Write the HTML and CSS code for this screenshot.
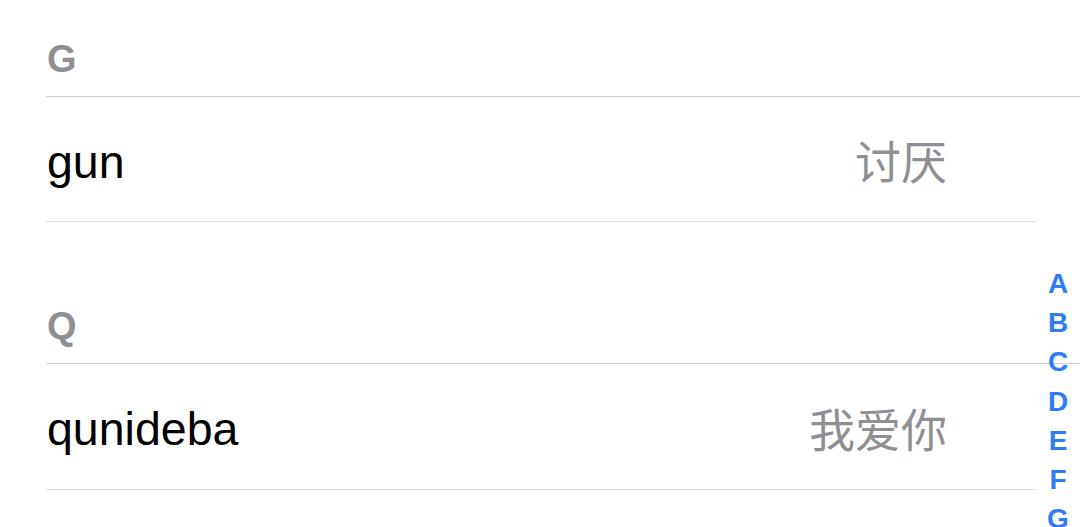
FILE: index.html
```html
<!DOCTYPE html>
<html lang="zh-CN">
<head>
    <meta charset="UTF-8">
    <meta name="viewport" content="width=device-width, initial-scale=1.0">
    <title>Contacts</title>
    <link rel="stylesheet" href="styles.css">
</head>
<body>
    <div id="wrapper">
        <div class="section first">
            <div class="section-header">G</div>
            <div class="row">
                <span class="name">gun</span>
                <span class="detail">讨厌</span>
            </div>
        </div>
        <div class="section">
            <div class="section-header">Q</div>
            <div class="row last">
                <span class="name">qunideba</span>
                <span class="detail">我爱你</span>
            </div>
        </div>

        <!-- 오른쪽 인덱스 바 -->
        <ul id="index">
            <li>A</li>
            <li>B</li>
            <li>C</li>
            <li>D</li>
            <li>E</li>
            <li>F</li>
            <li>G</li>
        </ul>
    </div>
</body>
</html>
```

FILE: styles.css
```css
html, body{
    margin: 0;
    padding: 0;
    background-color: #ffffff;
}

body{
    font-family: "Liberation Sans", "Noto Sans CJK SC", sans-serif;
    overflow: hidden;
}

#wrapper{
    position: relative;
    width: 1080px;
    height: 527px;
}

.section{
    padding-top: 45px;
}

.section.first{
    padding-top: 0;
}

.section-header{
    height: 97px;
    margin-left: 46px;
    padding-left: 1px;
    padding-top: 23px;
    box-sizing: border-box;
    display: flex;
    align-items: center;
    font-size: 38px;
    font-weight: bold;
    color: #8e8e93;
    border-bottom: 1px solid #cdcdd0;
}

.row{
    height: 124px;
    margin-left: 46px;
    margin-right: 44px;
    padding-left: 1px;
    padding-right: 89px;
    display: flex;
    align-items: center;
    justify-content: space-between;
    border-bottom: 1px solid #dcdcde;
}

.row.last{
    height: 125px;
}

.name{
    font-size: 46.5px;
    color: #000000;
    padding-top: 5px;
}

.detail{
    font-size: 46px;
    color: #8e8e93;
    font-family: "Noto Sans CJK SC", sans-serif;
    padding-top: 0;
}

#index{
    position: absolute;
    top: 264px;
    right: 6px;
    width: 32px;
    margin: 0;
    padding: 0;
    list-style: none;
}

#index li{
    height: 39.2px;
    line-height: 39.2px;
    text-align: center;
    font-size: 28px;
    font-weight: bold;
    color: #2f7cf6;
}
```
